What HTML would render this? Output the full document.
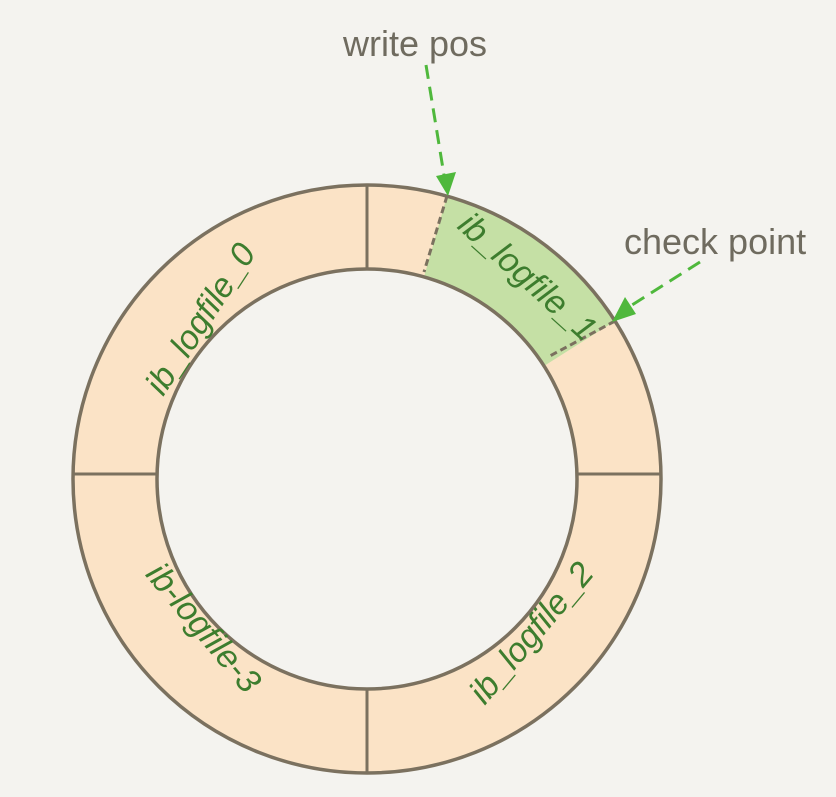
<!DOCTYPE html>
<html><head><style>
html,body{margin:0;padding:0;background:#f4f3ef;}
svg{display:block}
text{font-family:"Liberation Sans",sans-serif;}
</style></head><body>
<svg width="836" height="797" viewBox="0 0 836 797">
<rect width="836" height="797" fill="#f4f3ef"/>
<circle cx="367" cy="479" r="252" fill="none" stroke="#fbe3c6" stroke-width="84"/>
<path d="M447,196 A294 294 0 0 1 615,321 L544,366 A210 210 0 0 0 424,277 Z" fill="#c5e0a5"/>
<circle cx="367" cy="479" r="294" fill="none" stroke="#7b715f" stroke-width="3.5"/>
<circle cx="367" cy="479" r="210" fill="none" stroke="#7b715f" stroke-width="3.5"/>
<g stroke="#7b715f" stroke-width="3">
<line x1="367" y1="185" x2="367" y2="269"/>
<line x1="367" y1="689" x2="367" y2="773"/>
<line x1="73" y1="474" x2="157" y2="474"/>
<line x1="577" y1="474" x2="661" y2="474"/>
<line x1="447" y1="196" x2="424" y2="272" stroke-dasharray="7 4"/>
<line x1="615" y1="321" x2="548" y2="357" stroke-dasharray="7 4"/>
</g>
<g fill="#3d7d2e" font-size="34" font-style="italic">
<text transform="translate(210,325) rotate(-57)" text-anchor="middle">ib_logfile_0</text>
<text transform="translate(520,285) rotate(42)" text-anchor="middle">ib_logfile_1</text>
<text transform="translate(540,640) rotate(-50)" text-anchor="middle">ib_logfile_2</text>
<text transform="translate(195,635) rotate(50)" text-anchor="middle">ib-logfile-3</text>
</g>
<g fill="#6f6b5f" font-size="36">
<text x="343" y="56">write pos</text>
<text x="624" y="254">check point</text>
</g>
<g stroke="#4fb83c" stroke-width="3" stroke-dasharray="14 8" fill="none">
<line x1="426" y1="65" x2="444" y2="175"/>
<line x1="700" y1="262" x2="632" y2="305"/>
</g>
<g fill="#4fb83c">
<path d="M436,176 L456,172 L448,196 Z"/>
<path d="M625,297 L636,314 L612,322 Z"/>
</g>
</svg>
</body></html>
